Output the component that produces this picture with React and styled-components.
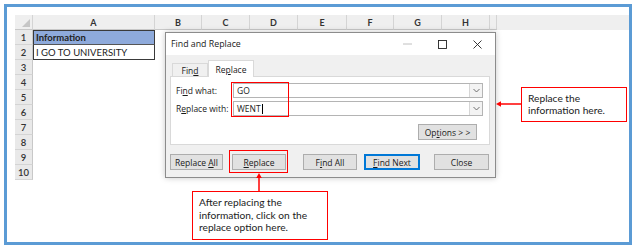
import React from "react";
import styled, { createGlobalStyle } from "styled-components";

const GlobalStyle = createGlobalStyle`
  body {
    margin: 0;
    background: #fff;
  }
`;

const Frame = styled.div`
  position: relative;
  box-sizing: border-box;
  margin: 4px 0 0 4px;
  width: 628px;
  height: 241px;
  border: 3px solid #5b9bd5;
  padding: 8px 0 0 8px;
  background: #fff;
`;

const Sheet = styled.div`
  display: flex;
  flex-direction: column;
  font-family: Lato, "Liberation Sans", sans-serif;
  color: #222;
`;

const HeaderRow = styled.div`
  display: flex;
  height: 15px;
  background: #efefef;
`;

const Corner = styled.div`
  position: relative;
  box-sizing: border-box;
  width: 18px;
  border-right: 1px solid #d4d4d4;
  border-bottom: 1px solid #c8c8c8;
  &::after {
    content: "";
    position: absolute;
    right: 2px;
    bottom: 2px;
    border-style: solid;
    border-width: 0 0 8px 8px;
    border-color: transparent transparent #c6c6c6 transparent;
  }
`;

const ColHead = styled.div`
  box-sizing: border-box;
  width: ${(p) => p.$w}px;
  display: flex;
  align-items: center;
  justify-content: center;
  font-size: 9px;
  font-weight: 700;
  color: #333;
  border-right: 1px solid #d4d4d4;
  border-bottom: 1px solid #c8c8c8;
`;

const Row = styled.div`
  display: flex;
  height: 15px;
`;

const RowNum = styled.div`
  box-sizing: border-box;
  width: 18px;
  display: flex;
  align-items: center;
  justify-content: center;
  background: #e9e9e9;
  border-right: 1px solid #c8c8c8;
  border-bottom: 1px solid #d4d4d4;
  font-size: 9.5px;
  font-weight: 600;
  color: #333;
`;

const Cell = styled.div`
  box-sizing: border-box;
  width: 122px;
  display: flex;
  align-items: center;
  padding-left: 2px;
  font-size: 9.5px;
  white-space: nowrap;
  ${(p) =>
    p.$head
      ? `background: #8eaadb; font-weight: 700; border: 1px solid #3a3a3a; border-bottom-color: #555;`
      : ""}
  ${(p) =>
    p.$data
      ? `border: 1px solid #3a3a3a; border-top: none; background: #fff;`
      : ""}
`;

const Dialog = styled.div`
  position: absolute;
  left: 158px;
  top: 25px;
  width: 331px;
  height: 146px;
  box-sizing: border-box;
  border: 1px solid #8c8c8c;
  background: #f0f0f0;
  box-shadow: 0 0 6px rgba(0, 0, 0, 0.22);
  display: flex;
  flex-direction: column;
  font-family: "Open Sans", "Noto Sans", sans-serif;
  font-size: 8.5px;
  color: #1a1a1a;
`;

const TitleBar = styled.div`
  height: 22px;
  background: #fff;
  display: flex;
  align-items: center;
  padding-left: 5px;
  font-size: 8.8px;
`;

const TitleText = styled.span`
  flex: 1;
`;

const WinCtl = styled.div`
  width: 35px;
  display: flex;
  align-items: center;
  justify-content: center;
  svg {
    display: block;
  }
`;

const Body = styled.div`
  padding: 5px 5px 0 4px;
`;

const Tabs = styled.div`
  display: flex;
  align-items: flex-end;
  height: 16px;
  padding-left: 2px;
  position: relative;
  z-index: 1;
`;

const Tab = styled.div`
  box-sizing: border-box;
  width: ${(p) => p.$w}px;
  height: ${(p) => (p.$active ? 17 : 13)}px;
  display: flex;
  align-items: center;
  justify-content: center;
  border: 1px solid #d9d9d9;
  border-bottom: none;
  background: ${(p) => (p.$active ? "#fff" : "#f0f0f0")};
  margin-bottom: ${(p) => (p.$active ? -1 : 0)}px;
`;

const Panel = styled.div`
  box-sizing: border-box;
  height: 69px;
  background: #fff;
  border: 1px solid #d9d9d9;
  padding: 6px 6px 0 5px;
  display: flex;
  flex-direction: column;
`;

const Field = styled.div`
  display: flex;
  align-items: center;
  height: 15px;
  margin-bottom: 3px;
`;

const Label = styled.div`
  width: 57px;
`;

const Combo = styled.div`
  box-sizing: border-box;
  width: 250px;
  height: 15px;
  border: 1px solid #b4b4b4;
  display: flex;
  align-items: center;
  background: #fff;
`;

const ComboText = styled.div`
  flex: 1;
  padding-left: 3px;
  display: flex;
  align-items: center;
`;

const Caret = styled.span`
  display: inline-block;
  width: 0;
  height: 10px;
  border-left: 1px solid #000;
  margin-left: 1px;
`;

const Drop = styled.div`
  box-sizing: border-box;
  width: 13px;
  height: 13px;
  border-left: 1px solid #d6d6d6;
  background: #f3f3f3;
  display: flex;
  align-items: center;
  justify-content: center;
`;

const OptionsRow = styled.div`
  display: flex;
  justify-content: flex-end;
  padding-right: 6px;
  margin-top: 5px;
`;

const Btn = styled.div`
  box-sizing: border-box;
  width: ${(p) => p.$w}px;
  height: 16px;
  margin-left: ${(p) => p.$ml || 0}px;
  display: flex;
  align-items: center;
  justify-content: center;
  background: #e1e1e1;
  border: ${(p) => (p.$primary ? "2px solid #0078d7" : "1px solid #adadad")};
  white-space: nowrap;
`;

const Buttons = styled.div`
  display: flex;
  margin-top: 9px;
`;

const Mark = styled.div`
  position: absolute;
  box-sizing: border-box;
  left: ${(p) => p.$x}px;
  top: ${(p) => p.$y}px;
  width: ${(p) => p.$w}px;
  height: ${(p) => p.$h}px;
  border: 1.5px solid #ff0000;
  pointer-events: none;
`;

const Callout = styled.div`
  position: absolute;
  box-sizing: border-box;
  left: ${(p) => p.$x}px;
  top: ${(p) => p.$y}px;
  width: ${(p) => p.$w}px;
  height: ${(p) => p.$h}px;
  border: 1.5px solid #ff0000;
  background: #fff;
  padding: ${(p) => p.$pad};
  font-family: Lato, "Liberation Sans", sans-serif;
  font-size: 10.2px;
  line-height: 12.5px;
  color: #222;
`;

const Arrow = styled.svg`
  position: absolute;
  left: ${(p) => p.$x}px;
  top: ${(p) => p.$y}px;
  overflow: visible;
`;

const columns = [
  ["B", 47],
  ["C", 48],
  ["D", 48],
  ["E", 49],
  ["F", 47],
  ["G", 48],
  ["H", 48],
];

const rows = [1, 2, 3, 4, 5, 6, 7, 8, 9, 10];

const Chevron = () => (
  <svg width="7" height="5" viewBox="0 0 7 5">
    <path d="M0.5 1 L3.5 4 L6.5 1" fill="none" stroke="#606060" strokeWidth="0.9" />
  </svg>
);

export default function App() {
  return (
    <>
      <GlobalStyle />
      <Frame>
        <Sheet>
          <HeaderRow>
            <Corner />
            <ColHead $w={122}>A</ColHead>
            {columns.map(([c, w]) => (
              <ColHead key={c} $w={w}>
                {c}
              </ColHead>
            ))}
            <ColHead $w={7} />
          </HeaderRow>
          {rows.map((r) => (
            <Row key={r}>
              <RowNum>{r}</RowNum>
              {r === 1 && <Cell $head>Information</Cell>}
              {r === 2 && <Cell $data>I GO TO UNIVERSITY</Cell>}
            </Row>
          ))}
        </Sheet>

        <Dialog>
          <TitleBar>
            <TitleText>Find and Replace</TitleText>
            <WinCtl>
              <svg width="9" height="2" viewBox="0 0 9 2">
                <line x1="0" y1="1" x2="9" y2="1" stroke="#b0b0b0" strokeWidth="0.8" />
              </svg>
            </WinCtl>
            <WinCtl>
              <svg width="9" height="9" viewBox="0 0 9 9">
                <rect x="0.5" y="0.5" width="8" height="8" fill="none" stroke="#222" strokeWidth="0.9" />
              </svg>
            </WinCtl>
            <WinCtl>
              <svg width="9" height="9" viewBox="0 0 9 9">
                <path d="M0.5 0.5 L8.5 8.5 M8.5 0.5 L0.5 8.5" stroke="#222" strokeWidth="0.9" />
              </svg>
            </WinCtl>
          </TitleBar>
          <Body>
            <Tabs>
              <Tab $w={36}>
                <span>
                  Fin<u>d</u>
                </span>
              </Tab>
              <Tab $w={46} $active>
                <span>
                  Re<u>p</u>lace
                </span>
              </Tab>
            </Tabs>
            <Panel>
              <Field>
                <Label>
                  Fi<u>n</u>d what:
                </Label>
                <Combo>
                  <ComboText>GO</ComboText>
                  <Drop>
                    <Chevron />
                  </Drop>
                </Combo>
              </Field>
              <Field>
                <Label>
                  R<u>e</u>place with:
                </Label>
                <Combo>
                  <ComboText>
                    WENT
                    <Caret />
                  </ComboText>
                  <Drop>
                    <Chevron />
                  </Drop>
                </Combo>
              </Field>
              <OptionsRow>
                <Btn $w={59}>
                  <span>
                    Op<u>t</u>ions &gt; &gt;
                  </span>
                </Btn>
              </OptionsRow>
            </Panel>
            <Buttons>
              <Btn $w={53}>
                <span>
                  Replace <u>A</u>ll
                </span>
              </Btn>
              <Btn $w={54} $ml={9}>
                <span>
                  <u>R</u>eplace
                </span>
              </Btn>
              <Btn $w={54} $ml={17}>
                <span>
                  F<u>i</u>nd All
                </span>
              </Btn>
              <Btn $w={56} $ml={7} $primary>
                <span>
                  <u>F</u>ind Next
                </span>
              </Btn>
              <Btn $w={55} $ml={14}>
                <span>Close</span>
              </Btn>
            </Buttons>
          </Body>
        </Dialog>

        <Mark $x={224} $y={75} $w={58} $h={35} />
        <Mark $x={222} $y={143} $w={59} $h={23} />

        <Arrow $x={247} $y={166} width="10" height="18" viewBox="0 0 10 18">
          <line x1="5" y1="4" x2="5" y2="18" stroke="#ff0000" strokeWidth="1.5" />
          <polygon points="5,0 2.2,5 7.8,5" fill="#ff0000" />
        </Arrow>
        <Callout $x={185} $y={184} $w={136} $h={49} $pad="4px 6px">
          After replacing the
          <br />
          information, click on the
          <br />
          replace option here.
        </Callout>

        <Arrow $x={489} $y={93} width="25" height="8" viewBox="0 0 25 8">
          <line x1="4" y1="4" x2="25" y2="4" stroke="#ff0000" strokeWidth="1.5" />
          <polygon points="0,4 5,1.3 5,6.7" fill="#ff0000" />
        </Arrow>
        <Callout $x={514} $y={80} $w={106} $h={35} $pad="3.5px 6px">
          Replace the
          <br />
          information here.
        </Callout>
      </Frame>
    </>
  );
}
